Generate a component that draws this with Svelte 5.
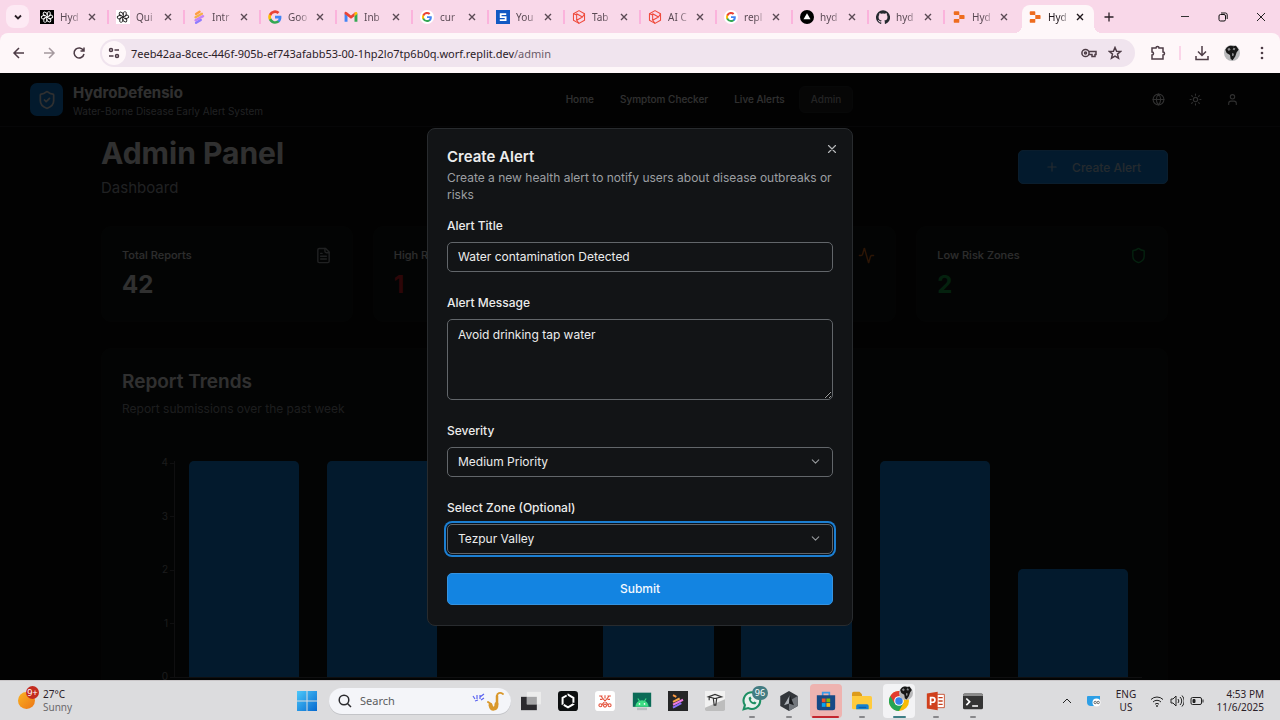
<script>
	const tabs = [
		{ icon: 'knot-dark', label: 'Hyd' },
		{ icon: 'knot', label: 'Qui' },
		{ icon: 'stripes', label: 'Intr' },
		{ icon: 'google', label: 'Goo' },
		{ icon: 'gmail', label: 'Inb' },
		{ icon: 'google-round', label: 'cur' },
		{ icon: 'letter', label: 'You' },
		{ icon: 'hex', label: 'Tab' },
		{ icon: 'hex', label: 'AI C' },
		{ icon: 'google-round', label: 'repl' },
		{ icon: 'vercel', label: 'hyd' },
		{ icon: 'github', label: 'hyd' },
		{ icon: 'replit', label: 'Hyd' },
		{ icon: 'replit', label: 'Hyd', active: true }
	];

	const links = ['Home', 'Symptom Checker', 'Live Alerts', 'Admin'];

	const stats = [
		{ label: 'Total Reports', value: 42, tone: 'plain', icon: 'file' },
		{ label: 'High Risk Zones', value: 1, tone: 'red', icon: 'alert' },
		{ label: 'Medium Risk Zones', value: 1, tone: 'orange', icon: 'activity' },
		{ label: 'Low Risk Zones', value: 2, tone: 'green', icon: 'shield' }
	];

	const max = 4;
	const ticks = [4, 3, 2, 1, 0];
	const reports = [4, 4, 0, 3, 3, 4, 2];

	const apps = [
		{ name: 'Task view', icon: 'taskview' },
		{ name: 'Hexagon', icon: 'hexagon' },
		{ name: 'Scissors', icon: 'scissors' },
		{ name: 'Android', icon: 'android' },
		{ name: 'Player', icon: 'player' },
		{ name: 'Lamp', icon: 'lamp' },
		{ name: 'WhatsApp', icon: 'whatsapp', open: true },
		{ name: 'Cursor', icon: 'cursor', open: true },
		{ name: 'Store', icon: 'store', alert: true },
		{ name: 'Explorer', icon: 'folder', open: true },
		{ name: 'Chrome', icon: 'chrome', active: true },
		{ name: 'PowerPoint', icon: 'powerpoint', open: true },
		{ name: 'Terminal', icon: 'terminal', open: true }
	];

	let title = 'Water contamination Detected';
	let message = 'Avoid drinking tap water';
	let severity = 'Medium Priority';
	let zone = 'Tezpur Valley';
</script>

{#snippet google()}
	<path fill="#4285f4" d="M23 12.3c0-.8-.1-1.600-.2-2.300H12v4.500h6.200a5.300 5.300 0 0 1-2.300 3.500v2.900h3.700c2.200-2 3.400-5 3.400-8.600z" />
	<path fill="#34a853" d="M12 23.500c3.100 0 5.700-1 7.600-2.800L15.900 18a7 7 0 0 1-10.400-3.700H1.700v3A11.500 11.500 0 0 0 12 23.500z" />
	<path fill="#fbbc05" d="M5.500 14.300a7 7 0 0 1 0-4.500v-3H1.700a11.500 11.500 0 0 0 0 10.500z" />
	<path fill="#ea4335" d="M12 5.100c1.700 0 3.200.6 4.400 1.700l3.300-3.300A11.500 11.500 0 0 0 1.700 6.800l3.800 3A6.900 6.900 0 0 1 12 5.100z" />
{/snippet}

{#snippet knot(color)}
	<g fill="none" stroke={color} stroke-width="1.600">
		{#each [0, 60, 120, 180, 240, 300] as turn}
			<path transform="rotate({turn} 12 12)" d="M12 8.500V6a3.200 3.200 0 0 1 5.500-2l-.1 5.500L12 12.500" />
		{/each}
	</g>
{/snippet}

{#snippet globe()}
	<circle cx="12" cy="12" r="12" fill="#b9b9bb" />
	<path fill="#161616" d="M2 7C5 1 10 0 14 2l4-1 4 6-3 4-2 6-4 6-3-2-1-6-5-3z" />
	<path fill="#8a8a8c" d="m5 6 3-2 2 3-3 2zm9-2 3 1-1 3-3-1zm-2 8 3 1-1 4-2-1z" />
{/snippet}

<div class="screen">
	<div class="browser">
		<div class="tabbar">
			<button class="tab-search" aria-label="Search tabs">
				<svg viewBox="0 0 12 12"><path d="m3 4.500 3 3 3-3" fill="none" stroke="#2b2027" stroke-width="1.800" /></svg>
			</button>
			{#each tabs as tab}
				<div class="tab" class:active={tab.active}>
					<svg class="favicon" viewBox="0 0 24 24">
						{#if tab.icon === 'knot-dark'}
							<rect width="24" height="24" fill="#000" />
							{@render knot('#fff')}
						{:else if tab.icon === 'knot'}
							<rect width="24" height="24" fill="#fff" />
							{@render knot('#222')}
						{:else if tab.icon === 'stripes'}
							<g fill="none" stroke-width="4" stroke-linecap="round">
								<path d="m7 7 6-4" stroke="#ff9d42" />
								<path d="m6 12.500 11-6" stroke="#f4b04a" />
								<path d="m6 17.500 13-7" stroke="#c783f5" />
								<path d="m7 22 8-5" stroke="#8f7bff" />
							</g>
						{:else if tab.icon === 'google'}
							{@render google()}
						{:else if tab.icon === 'gmail'}
							<path fill="#4285f4" d="M1 6v14h5V10z" />
							<path fill="#34a853" d="M23 6v14h-5V10z" />
							<path fill="#ea4335" d="M1 5c0-2 2-3 4-1l7 5.500L19 4l-1 6.500L12 15 1 7z" />
							<path fill="#fbbc04" d="m18 10.500 5-4C23 3 21 3 19 4l-1 1z" />
						{:else if tab.icon === 'google-round'}
							<circle cx="12" cy="12" r="12" fill="#fff" />
							<g transform="translate(3 3) scale(.75)">{@render google()}</g>
						{:else if tab.icon === 'letter'}
							<rect width="24" height="24" fill="#1259c3" />
							<path d="M17.500 7H8v5h8.500v5.500H6.500" fill="none" stroke="#fff" stroke-width="3" />
						{:else if tab.icon === 'hex'}
							<g fill="none" stroke="#ef4a3c" stroke-width="1.800" stroke-linejoin="round">
								<path d="m12 1 9.500 5.500v11L12 23l-9.500-5.500v-11z" />
								<path d="M8 6.500 18 12 8 17.500zM2.500 6.500 8 8.500M12 23l-4-5.500M21.500 6.500 18 12" />
							</g>
						{:else if tab.icon === 'vercel'}
							<circle cx="12" cy="12" r="12" fill="#000" />
							<path d="m12 5.500 6 10.500H6z" fill="#fff" />
						{:else if tab.icon === 'github'}
							<path fill="#24292f" d="M12 .5a12 12 0 0 0-3.800 23.400c.6.1.8-.3.800-.6v-2.200c-3.300.7-4-1.400-4-1.400-.6-1.400-1.400-1.800-1.400-1.800-1-.7.1-.7.1-.7 1.200.1 1.900 1.200 1.900 1.200 1 1.800 2.800 1.300 3.500 1 .1-.8.4-1.300.8-1.600-2.700-.3-5.500-1.300-5.500-6 0-1.300.5-2.300 1.200-3.200 0-.4-.5-1.600.2-3.200 0 0 1-.3 3.300 1.200a11.500 11.500 0 0 1 6 0c2.300-1.500 3.300-1.200 3.300-1.200.7 1.600.2 2.800.1 3.200.8.900 1.200 1.900 1.200 3.200 0 4.700-2.800 5.700-5.500 6 .5.4.9 1.100.9 2.200v3.300c0 .3.200.7.8.6A12 12 0 0 0 12 .5z" />
						{:else}
							<path fill="#ee6c1f" d="M4.500 2h6.500A1.500 1.500 0 0 1 12.500 3.500V8.500H4.500A1.500 1.500 0 0 1 3 7V3.500A1.500 1.500 0 0 1 4.500 2zM12.500 8.500h7.500a1.500 1.500 0 0 1 1.500 1.500v4a1.500 1.500 0 0 1-1.500 1.500h-7.500zM4.500 15.500h8v5a1.500 1.500 0 0 1-1.500 1.500H4.500A1.500 1.500 0 0 1 3 20.500V17a1.500 1.500 0 0 1 1.500-1.500z" />
						{/if}
					</svg>
					<span class="tab-label">{tab.label}</span>
					<button class="tab-close" aria-label="Close tab">
						<svg viewBox="0 0 8 8"><path d="m1 1 6 6m0-6L1 7" fill="none" stroke="currentColor" stroke-width="1.400" /></svg>
					</button>
				</div>
			{/each}
			<button class="new-tab" aria-label="New tab">
				<svg viewBox="0 0 10 10"><path d="M5 .5v9M.5 5h9" stroke="currentColor" stroke-width="1.300" /></svg>
			</button>
			<div class="window-controls">
				<button aria-label="Minimize"><svg viewBox="0 0 10 10"><path d="M1 4.500h8" stroke="#333" fill="none" /></svg></button>
				<button aria-label="Restore">
					<svg viewBox="0 0 10 10">
						<g fill="none" stroke="#111"><rect x="1" y="2.500" width="6.500" height="6.500" rx="1.500" /><path d="M3 1h4.500A1.800 1.800 0 0 1 9.200 2.800V7" /></g>
					</svg>
				</button>
				<button aria-label="Close"><svg viewBox="0 0 10 10"><path d="m1 1 8 8m0-8L1 9" stroke="#222" fill="none" /></svg></button>
			</div>
		</div>

		<div class="toolbar">
			<div class="nav-buttons">
				<button aria-label="Back"><svg viewBox="0 0 14 14"><path d="M12 7H2m5-5L2 7l5 5" /></svg></button>
				<button class="faded" aria-label="Forward"><svg viewBox="0 0 14 14"><path d="M2 7h10M7 2l5 5-5 5" /></svg></button>
				<button aria-label="Reload"><svg viewBox="0 0 14 14"><path d="M11.500 4.500A5 5 0 1 0 12 8M12 1.500V5H8.500" /></svg></button>
			</div>
			<div class="address">
				<button class="site-info" aria-label="Site information">
					<svg viewBox="0 0 14 14"><circle cx="4" cy="4" r="1.500" /><path d="M7.500 4H12M2 10h4.500" /><circle cx="10" cy="10" r="1.500" /></svg>
				</button>
				<span class="url">7eeb42aa-8cec-446f-905b-ef743afabb53-00-1hp2lo7tp6b0q.worf.replit.dev<span>/admin</span></span>
				<button aria-label="Passwords">
					<svg class="key" viewBox="0 0 16 12"><circle cx="4.500" cy="6" r="3.600" /><circle cx="4.500" cy="6" r="1" /><path d="M8 4.500h7v3h-1v2h-3v-2H8" /></svg>
				</button>
				<button aria-label="Bookmark">
					<svg viewBox="0 0 14 14"><path d="m7 1.500 1.600 3.700 4 .3-3.100 2.600 1 4L7 10l-3.500 2.100 1-4L1.400 5.500l4-.3z" /></svg>
				</button>
			</div>
			<div class="extras">
				<button aria-label="Extensions">
					<svg viewBox="0 0 16 16"><path d="M2 3h4c0-2 3-2 3 0h4v4c2 0 2 3 0 3v4H2v-4c2 0 2-3 0-3z" /></svg>
				</button>
				<span class="divider"></span>
				<button aria-label="Downloads"><svg viewBox="0 0 16 16"><path d="M8 1v9M4 6.500l4 4 4-4M2 11v3.500h12V11" /></svg></button>
				<button aria-label="Profile"><svg class="avatar" viewBox="0 0 24 24">{@render globe()}</svg></button>
				<button aria-label="Menu">
					<svg class="dots" viewBox="0 0 16 16"><circle cx="8" cy="3" r="1.300" /><circle cx="8" cy="8" r="1.300" /><circle cx="8" cy="13" r="1.300" /></svg>
				</button>
			</div>
		</div>
	</div>

	<div class="viewport">
		<header class="site-header">
			<div class="brand">
				<span class="logo">
					<svg class="icon" viewBox="0 0 24 24"><path d="M20 13c0 5-3.500 7.500-7.660 8.950a1 1 0 0 1-.67-.01C7.500 20.500 4 18 4 13V6a1 1 0 0 1 1-1c2 0 4.500-1.200 6.240-2.720a1.170 1.170 0 0 1 1.520 0C14.510 3.810 17 5 19 5a1 1 0 0 1 1 1z" /><path d="m9 12 2 2 4-4" /></svg>
				</span>
				<div class="brand-text">
					<div class="brand-name">HydroDefensio</div>
					<div class="brand-sub">Water-Borne Disease Early Alert System</div>
				</div>
			</div>
			<nav>
				{#each links as link}
					<a href="#{link}" class:current={link === 'Admin'}>{link}</a>
				{/each}
			</nav>
			<div class="header-actions">
				<button aria-label="Language"><svg class="icon" viewBox="0 0 24 24"><circle cx="12" cy="12" r="10" /><path d="M12 2a14.500 14.500 0 0 0 0 20 14.500 14.500 0 0 0 0-20M2 12h20" /></svg></button>
				<button aria-label="Theme"><svg class="icon" viewBox="0 0 24 24"><circle cx="12" cy="12" r="4" /><path d="M12 2v2m0 16v2M4.900 4.900l1.400 1.400m11.400 11.400 1.400 1.400M2 12h2m16 0h2M6.300 17.700l-1.400 1.400M19.100 4.900l-1.400 1.400" /></svg></button>
				<button aria-label="Account"><svg class="icon" viewBox="0 0 24 24"><path d="M19 21v-2a4 4 0 0 0-4-4H9a4 4 0 0 0-4 4v2" /><circle cx="12" cy="7" r="4" /></svg></button>
			</div>
		</header>

		<main>
			<div class="page-head">
				<div>
					<h1>Admin Panel</h1>
					<p>Dashboard</p>
				</div>
				<button class="primary create">
					<svg class="icon" viewBox="0 0 24 24"><path d="M5 12h14M12 5v14" /></svg>
					Create Alert
				</button>
			</div>

			<div class="stats">
				{#each stats as stat}
					<div class="card stat {stat.tone}">
						<div class="stat-head">
							<span>{stat.label}</span>
							<svg class="icon" viewBox="0 0 24 24">
								{#if stat.icon === 'file'}
									<path d="M15 2H6a2 2 0 0 0-2 2v16a2 2 0 0 0 2 2h12a2 2 0 0 0 2-2V7z" />
									<path d="M14 2v4a2 2 0 0 0 2 2h4M10 9H8m8 4H8m8 4H8" />
								{:else if stat.icon === 'alert'}
									<path d="m12 3 10 18H2zM12 9v5m0 3v1" />
								{:else if stat.icon === 'activity'}
									<path d="M22 12h-2.500a2 2 0 0 0-1.900 1.500l-2.400 8.300a.2.200 0 0 1-.4 0L9.200 2.200a.2.200 0 0 0-.4 0l-2.400 8.300A2 2 0 0 1 4.500 12H2" />
								{:else}
									<path d="M20 13c0 5-3.500 7.500-7.660 8.950a1 1 0 0 1-.67-.01C7.500 20.500 4 18 4 13V6a1 1 0 0 1 1-1c2 0 4.500-1.200 6.240-2.720a1.170 1.170 0 0 1 1.520 0C14.510 3.810 17 5 19 5a1 1 0 0 1 1 1z" />
								{/if}
							</svg>
						</div>
						<div class="stat-value">{stat.value}</div>
					</div>
				{/each}
			</div>

			<section class="card trends">
				<h2>Report Trends</h2>
				<p>Report submissions over the past week</p>
				<div class="chart">
					<div class="y-axis">
						{#each ticks as tick}
							<span>{tick}</span>
						{/each}
					</div>
					<div class="plot">
						{#each reports as count}
							<div class="band"><div class="bar" style="height: {(count / max) * 100}%"></div></div>
						{/each}
					</div>
				</div>
			</section>
		</main>

		<div class="overlay">
			<div class="dialog" role="dialog" aria-labelledby="dialog-title">
				<button class="close" aria-label="Close">
					<svg class="icon" viewBox="0 0 24 24"><path d="M18 6 6 18M6 6l12 12" /></svg>
				</button>
				<h2 id="dialog-title">Create Alert</h2>
				<p>Create a new health alert to notify users about disease outbreaks or risks</p>
				<form>
					<div class="fields">
						<div class="field">
							<label for="title">Alert Title</label>
							<input id="title" type="text" bind:value={title} />
						</div>
						<div class="field">
							<label for="message">Alert Message</label>
							<textarea id="message" bind:value={message}></textarea>
						</div>
						<div class="field">
							<label for="severity">Severity</label>
							<div class="select">
								<select id="severity" bind:value={severity}>
									<option>Low Priority</option>
									<option>Medium Priority</option>
									<option>High Priority</option>
								</select>
								<svg class="icon" viewBox="0 0 24 24"><path d="m6 9 6 6 6-6" /></svg>
							</div>
						</div>
						<div class="field">
							<label for="zone">Select Zone (Optional)</label>
							<div class="select focused">
								<select id="zone" bind:value={zone}>
									<option>Tezpur Valley</option>
								</select>
								<svg class="icon" viewBox="0 0 24 24"><path d="m6 9 6 6 6-6" /></svg>
							</div>
						</div>
					</div>
					<button type="button" class="primary">Submit</button>
				</form>
			</div>
		</div>
	</div>

	<footer class="taskbar">
		<div class="weather">
			<div class="sun"><span class="count">9+</span></div>
			<div>
				<div>27°C</div>
				<div class="soft">Sunny</div>
			</div>
		</div>

		<div class="dock">
			<button class="start" aria-label="Start">
				<svg viewBox="0 0 20 20">
					<defs>
						<linearGradient id="win" x1="0" y1="0" x2="1" y2="1"><stop offset="0" stop-color="#4cc8fa" /><stop offset="1" stop-color="#0568cf" /></linearGradient>
					</defs>
					<path fill="url(#win)" d="M0 0h9.500v9.500H0zM10.500 0H20v9.500h-9.500zM0 10.500h9.500V20H0zM10.500 10.500H20V20h-9.500z" />
				</svg>
			</button>
			<label class="search">
				<svg viewBox="0 0 14 14"><circle cx="6" cy="6" r="4.800" /><path d="m9.500 9.500 3.500 3.500" /></svg>
				<input type="text" placeholder="Search" aria-label="Search" />
				<svg class="sax" viewBox="0 0 34 22">
					<g fill="none" stroke="#5b63f0" stroke-width="1.200"><path d="m2 6 2 3m2-4v4m3-2 4-3M4 11l3-1m3 0 3-2M9 5v4" /></g>
					<g fill="none" stroke="#d9982b" stroke-linecap="round"><path stroke-width="1.800" d="M32 4c-3-2-6-1-6 2" /><path stroke-width="2.500" d="M26 6v8" /><path stroke-width="4" d="M25.500 14c0 6-5 6-6 1" /><path stroke-width="2" d="m17 12 3 2" /></g>
				</svg>
			</label>
			<div class="apps">
				{#each apps as app}
					<button class="app" class:open={app.open} class:active={app.active} class:alert={app.alert} aria-label={app.name}>
						<svg viewBox="0 0 24 24">
							{#if app.icon === 'taskview'}
								<path fill="#2b2a2e" d="M0 7h19v16H0z" />
								<path fill="#ececec" d="M7 1h17v15H7z" /><path fill="#a5a5a7" d="M7 7h12v9H7z" />
							{:else if app.icon === 'hexagon'}
								<rect width="24" height="24" rx="4" fill="#0d0f10" />
								<path d="m12 4.500 6.500 3.700v7.600L12 19.500l-6.500-3.700V8.200z" fill="none" stroke="#fff" stroke-width="2.400" stroke-dasharray="13.500 1.400" />
							{:else if app.icon === 'scissors'}
								<rect width="24" height="24" rx="4" fill="#fff" />
								<g fill="none" stroke="#e4513b" stroke-width="1.300"><path d="m7 6 9 11M17 6 8 17M5 6h4m6 0h4M9 10H6m9 0h3M12 5v4" /><circle cx="6.500" cy="17" r="1.800" /><circle cx="12" cy="17.500" r="1.800" /><circle cx="17.500" cy="17" r="1.800" /></g>
							{:else if app.icon === 'android'}
								<rect x="1" y="2" width="22" height="17" fill="#0b6b57" />
								<path fill="#3ddc84" d="M4 19a8 8 0 0 1 16 0z" /><path d="m7 9 2 3m8-3-2 3" stroke="#3ddc84" stroke-width="1.400" />
								<circle cx="9" cy="15.500" r="1" fill="#fff" /><circle cx="15" cy="15.500" r="1" fill="#fff" />
								<path fill="#b9bec0" d="M6 20h12v3H6z" />
							{:else if app.icon === 'player'}
								<rect width="24" height="24" fill="#252627" />
								<g stroke-width="2.400"><path d="m6 5 4 2" stroke="#ff9b42" /><path d="m6 13 8-4" stroke="#f5a54b" /><path d="m6 16.500 12-6" stroke="#ed7be0" /><path d="m6 20 10-5.500" stroke="#8d72ff" /></g>
							{:else if app.icon === 'lamp'}
								<rect width="24" height="24" rx="2" fill="#bdbdbd" /><path fill="#f1f1f1" d="M0 0h24v10L0 20z" />
								<g fill="none" stroke="#333" stroke-width="1.400"><path d="M4 7l8-3 8 3-8 2zM10 9l1 8h2l1-8M5 8v3" /></g>
							{:else if app.icon === 'whatsapp'}
								<path d="M2 22 3.500 17A10 10 0 1 1 7.500 20.500z" fill="#e8f1ed" stroke="#1d8f63" stroke-width="2.500" />
								<path d="M8 8c0 5 4 8 8 8l1.500-2-2.500-1.500-1.500 1c-1.500-.5-2.500-1.500-3-3l1-1.500L10 6.500z" fill="#1d8f63" />
							{:else if app.icon === 'cursor'}
								<path fill="#33363b" d="m12 0 10.500 6v12L12 24 1.500 18V6z" /><path fill="#73777d" d="m12 12 10.500-6v12L12 24z" />
								<path fill="#aeb2b8" d="M13 5 6 17l6-2z" /><path fill="#191b1f" d="m13 5 5 12-6-2z" />
							{:else if app.icon === 'store'}
								<path d="M8 6V2h8v4" fill="none" stroke="#3b9bea" stroke-width="2" /><path fill="#174a86" d="M1 5h22v15a3 3 0 0 1-3 3H4a3 3 0 0 1-3-3z" />
								<path fill="#f35325" d="M7 9h4.500v4.500H7z" /><path fill="#81bc06" d="M12.500 9H17v4.500h-4.500z" /><path fill="#05a6f0" d="M7 14.500h4.500V19H7z" /><path fill="#ffba08" d="M12.500 14.500H17V19h-4.500z" />
							{:else if app.icon === 'folder'}
								<path fill="#dd9b1b" d="M0 3a2 2 0 0 1 2-2h7l3 3v4H0z" /><path fill="#ffcb3d" d="M0 6h22a2 2 0 0 1 2 2v12a2 2 0 0 1-2 2H2a2 2 0 0 1-2-2z" /><path fill="#1681d0" d="M5 22v-4a2 2 0 0 1 2-2h11a2 2 0 0 1 2 2v4z" /><path fill="#0f5fa4" d="M8 19h9v1.500H8z" />
							{:else if app.icon === 'chrome'}
								<circle cx="12" cy="12" r="12" fill="#f9bb05" /><path fill="#23a455" d="M1.600 6A12 12 0 0 0 12 24l5.200-9L12 12z" />
								<path fill="#e33b2e" d="M1.600 6 6.800 15 12 12V6h10.400A12 12 0 0 0 1.600 6z" /><circle cx="12" cy="12" r="5.800" fill="#fff" /><circle cx="12" cy="12" r="4.500" fill="#357fe8" />
							{:else if app.icon === 'powerpoint'}
								<path fill="#fff" stroke="#c43e1c" d="M12 4h10v16H12z" /><path d="M15 8h5m-5 4h5m-5 4h5" stroke="#c43e1c" stroke-width="1.600" />
								<path fill="#d0401d" d="m1 3 13-2v22L1 21z" /><path d="M5.500 17V8h2.500a2.500 2.500 0 0 1 0 5.500H6" fill="none" stroke="#fff" stroke-width="2" />
							{:else}
								<rect y="3" width="24" height="19" rx="2" fill="#343434" /><path fill="#8b8b8b" d="M0 5a2 2 0 0 1 2-2h20a2 2 0 0 1 2 2v1H0z" />
								<path d="m4 9 4 4-4 4m7 1h7" fill="none" stroke="#fff" stroke-width="2" />
							{/if}
						</svg>
						{#if app.icon === 'whatsapp'}
							<span class="badge">96</span>
						{:else if app.icon === 'chrome'}
							<svg class="badge-globe" viewBox="0 0 24 24">{@render globe()}</svg>
						{/if}
					</button>
				{/each}
			</div>
		</div>

		<div class="tray">
			<svg viewBox="0 0 14 14"><path d="m3 9 4-4 4 4" /></svg>
			<svg class="meet" viewBox="0 0 16 14">
				<path fill="#2d9fe6" stroke="none" d="M1 3a1 1 0 0 1 1-1h12v8l-5 2H5a4 4 0 0 1-4-4z" /><circle cx="10.500" cy="8.500" r="4" fill="#fff" stroke="none" />
				<circle cx="9.200" cy="8.500" r="1.200" stroke="#666" /><circle cx="12.200" cy="8.500" r="1.200" stroke="#666" />
			</svg>
			<div class="lang"><div>ENG</div><div>US</div></div>
			<div class="status">
				<svg viewBox="0 0 14 14"><path d="M1 5.500a8.500 8.500 0 0 1 12 0M3 8a5.500 5.500 0 0 1 8 0M5 10.200a3 3 0 0 1 4 0" /><circle cx="7" cy="12" r=".6" /></svg>
				<svg viewBox="0 0 14 14"><path d="M1 5h2l3-3v10L3 9H1zM8 5a3 3 0 0 1 0 4m2-6a5.500 5.500 0 0 1 0 8m2-9.500a8 8 0 0 1 0 11" /></svg>
				<svg viewBox="0 0 14 14"><rect x="1" y="3.500" width="10.500" height="7" rx="1.500" /><path d="M13 5.500v3" /><path fill="#222" d="M3 5.500h2v3H3z" /></svg>
			</div>
			<div class="clock"><div>4:53 PM</div><div>11/6/2025</div></div>
		</div>
	</footer>
</div>

<style>
	:global(body) {
		background: #020202;
	}

	.screen {
		display: flex;
		flex-direction: column;
		height: 100vh;
		overflow: hidden;
		font-family: 'Noto Sans', 'Open Sans', sans-serif;
		font-size: 12px;
		color: #2b2027;
	}

	.screen * {
		box-sizing: border-box;
	}

	button {
		display: flex;
		align-items: center;
		justify-content: center;
		padding: 0;
		border: none;
		background: none;
		color: inherit;
		font: inherit;
		flex-shrink: 0;
	}

	svg {
		display: block;
		flex-shrink: 0;
	}

	h1,
	h2,
	p {
		margin: 0;
	}

	/* browser chrome */
	.browser {
		flex-shrink: 0;
		background: #f9d8e9;
	}

	.tabbar {
		display: flex;
		align-items: center;
		height: 33px;
		padding-left: 6px;
	}

	.tab-search {
		width: 23px;
		height: 23px;
		margin-right: 5px;
		border-radius: 8px;
		background: #fdeaf4;
	}

	.tab-search svg {
		width: 12px;
		height: 12px;
	}

	.tab {
		display: flex;
		align-items: center;
		position: relative;
		flex: 0 1 76px;
		min-width: 0;
		height: 28px;
		padding: 0 14px 0 6px;
		color: #5a4a54;
	}

	.tab::after {
		content: '';
		position: absolute;
		right: 1px;
		width: 2px;
		height: 14px;
		background: #fbb3dc;
	}

	.tab.active {
		align-self: flex-end;
		flex-basis: 72px;
		padding-right: 10px;
		padding-bottom: 5px;
		border-radius: 8px 8px 0 0;
		background: #fef7f9;
		color: #1f171c;
	}

	.tab.active::after,
	.tab.active::before {
		content: '';
		position: absolute;
		bottom: 0;
		right: -8px;
		width: 8px;
		height: 8px;
		background: radial-gradient(circle at 100% 0, transparent 8px, #fef7f9 8px);
	}

	.tab.active::before {
		right: auto;
		left: -8px;
		background: radial-gradient(circle at 0 0, transparent 8px, #fef7f9 8px);
	}

	.tab:has(+ .active)::after {
		display: none;
	}

	.favicon {
		width: 14px;
		height: 14px;
	}

	.tab-label {
		flex: 1;
		min-width: 0;
		margin: 0 6px;
		white-space: nowrap;
		font-size: 10px;
		mask-image: linear-gradient(90deg, #000 50%, transparent);
	}

	.tab-close svg {
		width: 8px;
		height: 8px;
	}

	.new-tab {
		width: 26px;
		height: 26px;
		margin-left: 2px;
	}

	.new-tab svg,
	.window-controls svg {
		width: 10px;
		height: 10px;
	}

	.window-controls {
		display: flex;
		margin-left: auto;
	}

	.window-controls button {
		width: 38px;
		height: 32px;
	}

	.toolbar {
		display: flex;
		align-items: center;
		height: 40px;
		border-radius: 8px 8px 0 0;
		background: #fef7f9;
	}

	.toolbar svg {
		width: 14px;
		height: 14px;
		fill: none;
		stroke: #4d3c46;
		stroke-width: 1.5;
	}

	.nav-buttons {
		display: flex;
		padding: 0 6px 0 4px;
	}

	.nav-buttons button {
		width: 30px;
		height: 30px;
	}

	.faded {
		opacity: 0.5;
	}

	.address {
		display: flex;
		align-items: center;
		flex: 1;
		min-width: 0;
		height: 28px;
		padding: 0 7px 0 2px;
		border-radius: 14px;
		background: #f0e4ee;
	}

	.address button {
		width: 26px;
		height: 24px;
	}

	.address .site-info {
		width: 24px;
		border-radius: 12px;
		background: #fef7f9;
	}

	.address .key {
		width: 16px;
		height: 12px;
	}

	.url {
		flex: 1;
		min-width: 0;
		padding-left: 5px;
		white-space: nowrap;
		font-size: 11px;
	}

	.url span {
		color: #6a5a68;
	}

	.extras {
		display: flex;
		align-items: center;
		padding: 0 3px 0 8px;
	}

	.extras button {
		width: 30px;
		height: 30px;
	}

	.divider {
		width: 2px;
		height: 14px;
		margin: 0 6px;
		background: #fbd5e9;
	}

	.toolbar .extras svg {
		width: 16px;
		height: 16px;
	}

	.toolbar .avatar {
		stroke: none;
	}

	.toolbar .dots {
		fill: #4d3c46;
		stroke: none;
	}

	/* web page */
	.viewport {
		position: relative;
		flex: 1;
		min-height: 0;
		overflow: hidden;
		background: #0a0a0b;
		color: #f0f0f0;
		font-family: Inter, sans-serif;
	}

	.icon {
		fill: none;
		stroke: currentColor;
		stroke-width: 2;
		stroke-linecap: round;
		stroke-linejoin: round;
	}

	.site-header {
		display: flex;
		align-items: center;
		justify-content: space-between;
		height: 54px;
		padding: 0 32px 0 30px;
		border-bottom: 1px solid #202124;
	}

	.brand {
		display: flex;
		align-items: center;
		gap: 10px;
	}

	.logo {
		display: grid;
		place-items: center;
		width: 33px;
		height: 33px;
		border-radius: 7px;
		background: #1384e1;
	}

	.logo .icon {
		width: 20px;
		height: 20px;
	}

	.brand-text {
		padding-top: 2px;
	}

	.brand-name {
		font-size: 15px;
		line-height: 20px;
		font-weight: 700;
	}

	.brand-sub {
		font-size: 10px;
		line-height: 16px;
		color: #a0a4a8;
	}

	nav {
		display: flex;
		gap: 2px;
	}

	nav a {
		padding: 0 11px;
		border: 1px solid transparent;
		border-radius: 6px;
		line-height: 25px;
		font-size: 10px;
		font-weight: 500;
		color: inherit;
		text-decoration: none;
	}

	nav .current {
		border-color: #26282a;
		background: #1e1f21;
		color: #b0b0b2;
	}

	.header-actions {
		display: flex;
		justify-content: flex-end;
		gap: 7px;
	}

	.header-actions button {
		width: 30px;
		height: 30px;
	}

	.header-actions .icon {
		width: 13px;
		height: 13px;
	}

	main {
		width: calc(100% - 213px);
		margin-left: 101px;
		padding-top: 7px;
	}

	.page-head {
		display: flex;
		align-items: center;
		justify-content: space-between;
		margin-bottom: 26px;
	}

	h1 {
		font-size: 30px;
		line-height: 38px;
		font-weight: 700;
	}

	.page-head p {
		margin-top: 4px;
		font-size: 15px;
		line-height: 24px;
		color: #a0a4a8;
	}

	.primary {
		height: 32px;
		border: 1px solid #3593e0;
		border-radius: 5px;
		background: #1384e1;
		color: #f4f9ff;
		font-size: 12px;
		font-weight: 500;
	}

	.create {
		height: 34px;
		gap: 13px;
		padding: 0 26px;
		color: #b4cfe6;
	}

	.create .icon {
		width: 14px;
		height: 14px;
	}

	.card {
		border: 1px solid #151817;
		border-radius: 10px;
		background: #111514;
	}

	.stats {
		display: grid;
		grid-template-columns: repeat(4, 1fr);
		gap: 20px;
		margin-bottom: 26px;
	}

	.stat {
		padding: 20px 20px 21px;
	}

	.stat-head {
		display: flex;
		align-items: center;
		justify-content: space-between;
		height: 16px;
		color: #e0e0e0;
		font-size: 11px;
		font-weight: 500;
	}

	.stat-head .icon {
		width: 17px;
		height: 17px;
		color: #a0a4a8;
	}

	.stat-value {
		margin-top: 7px;
		font-size: 24px;
		line-height: 30px;
		font-weight: 700;
	}

	.red .stat-value,
	.red .icon {
		color: #e01e28;
	}

	.orange .stat-value,
	.orange .icon {
		color: #d9681a;
	}

	.green .stat-value,
	.green .icon {
		color: #16a349;
	}

	.trends {
		padding: 19px 20px 60px;
	}

	.trends h2 {
		font-size: 19px;
		line-height: 28px;
		font-weight: 600;
	}

	.trends p {
		margin-top: 4px;
		font-size: 12px;
		line-height: 18px;
		color: #8c9094;
	}

	.chart {
		display: flex;
		margin-top: 43px;
		padding-right: 5px;
	}

	.y-axis {
		display: flex;
		flex-direction: column;
		justify-content: space-between;
		width: 52px;
		height: 217px;
		color: #85898c;
		font-size: 10px;
		line-height: 2px;
		text-align: right;
	}

	.y-axis span::after {
		content: '';
		display: inline-block;
		width: 4px;
		height: 1px;
		margin-left: 2px;
		vertical-align: middle;
		background: #4a4d4f;
	}

	.plot {
		display: grid;
		grid-template-columns: repeat(7, 1fr);
		flex: 1;
		height: 217px;
		border: solid #4a4d4f;
		border-width: 0 0 1px 1px;
	}

	.band {
		display: flex;
		align-items: flex-end;
		padding: 0 10%;
	}

	.bar {
		flex: 1;
		border-radius: 5px 5px 0 0;
		background: #1384e1;
	}

	.overlay {
		position: absolute;
		inset: 0;
		display: grid;
		place-items: center;
		background: rgba(0, 0, 0, 0.8);
	}

	.dialog {
		position: relative;
		width: 426px;
		max-width: 100%;
		padding: 20px 19px 20px;
		border: 1px solid #282b2e;
		border-radius: 8px;
		background: #121416;
		color: #ececec;
	}

	.dialog h2 {
		font-size: 15px;
		line-height: 16px;
		font-weight: 600;
	}

	.dialog p {
		margin: 4px 0 15px;
		font-size: 12px;
		line-height: 17px;
		color: #9c9fa2;
	}

	.close {
		position: absolute;
		top: 13px;
		right: 13px;
		width: 14px;
		height: 14px;
		color: #b5b7b9;
	}

	.close .icon {
		width: 14px;
		height: 14px;
	}

	form {
		display: grid;
		gap: 19px;
	}

	.fields {
		display: grid;
		gap: 23px;
	}

	.field {
		display: grid;
		gap: 8px;
	}

	label {
		font-size: 12px;
		line-height: 16px;
		font-weight: 500;
	}

	.field input,
	textarea,
	select {
		display: block;
		width: 100%;
		height: 30px;
		margin: 0;
		padding: 0 10px;
		border: 1px solid #62666a;
		border-radius: 5px;
		outline: none;
		background: #121416;
		color: #ececec;
		font-family: inherit;
		font-size: 12px;
		line-height: 17px;
	}

	textarea {
		height: 81px;
		padding-top: 6px;
		resize: vertical;
		color-scheme: dark;
	}

	select {
		appearance: none;
	}

	.select {
		display: grid;
		align-items: center;
	}

	.select > * {
		grid-area: 1 / 1;
	}

	.select .icon {
		justify-self: end;
		width: 13px;
		height: 13px;
		margin-right: 11px;
		color: #96999c;
		pointer-events: none;
	}

	.focused select {
		box-shadow:
			0 0 0 1px #07131f,
			0 0 0 3px #1c7fd2;
	}

	/* taskbar */
	.taskbar {
		display: grid;
		grid-template-columns: 1fr auto 1fr;
		align-items: center;
		height: 40px;
		flex-shrink: 0;
		border-top: 1px solid #c9c6c8;
		background: #dcdcde;
		font-size: 10px;
		line-height: 13px;
	}

	.weather {
		display: flex;
		align-items: center;
		gap: 8px;
		padding-left: 18px;
	}

	.sun {
		position: relative;
		width: 17px;
		height: 17px;
		border-radius: 50%;
		background: linear-gradient(135deg, #fbb321, #ec7516);
	}

	.count {
		position: absolute;
		top: -6px;
		left: 8px;
		width: 13px;
		border-radius: 7px;
		background: #c42b1f;
		color: #fff;
		font-size: 9px;
		line-height: 13px;
		text-align: center;
	}

	.soft {
		color: #6a696c;
	}

	.dock {
		display: flex;
		align-items: center;
	}

	.start {
		width: 36px;
		height: 36px;
		margin-right: 4px;
	}

	.start svg {
		width: 20px;
		height: 20px;
	}

	.search {
		display: flex;
		align-items: center;
		gap: 8px;
		width: 182px;
		height: 26px;
		margin-right: 2px;
		padding: 0 6px 0 9px;
		border-radius: 13px;
		background: #f4f5f9;
		box-shadow: 0 1px 0 #c3c4c8;
	}

	.search svg {
		width: 14px;
		height: 14px;
		fill: none;
		stroke: #2b2b2e;
		stroke-width: 1.5;
	}

	.search .sax {
		width: 34px;
		height: 22px;
	}

	.search input {
		flex: 1;
		min-width: 0;
		padding: 0;
		border: none;
		outline: none;
		background: none;
		font-family: inherit;
		font-size: 11px;
	}

	.search input::placeholder {
		color: #5b5c60;
	}

	.apps {
		display: grid;
		grid-template-columns: repeat(13, 1fr);
		width: 478px;
	}

	.app {
		position: relative;
		justify-self: center;
		width: 32px;
		height: 34px;
		border-radius: 4px;
	}

	.app > svg {
		width: 20px;
		height: 20px;
	}

	.app.active {
		background: #f3f3f5;
	}

	.app.alert {
		background: #eeb3b0;
	}

	.app.open::after,
	.app.active::after,
	.app.alert::after {
		content: '';
		position: absolute;
		bottom: 0;
		width: 6px;
		height: 2px;
		border-radius: 2px;
		background: #88888b;
	}

	.app.active::after {
		width: 13px;
		background: #3f7f86;
	}

	.app.alert::after {
		width: 27px;
		background: #c4262e;
	}

	.badge {
		position: absolute;
		top: 2px;
		right: 0;
		width: 16px;
		border-radius: 7px;
		background: #437c82;
		color: #fff;
		font-size: 9px;
		line-height: 14px;
	}

	.app .badge-globe {
		position: absolute;
		top: 2px;
		right: 2px;
		width: 14px;
		height: 14px;
	}

	.tray {
		display: flex;
		align-items: center;
		justify-content: flex-end;
		padding-right: 16px;
	}

	.tray svg {
		width: 14px;
		height: 14px;
		fill: none;
		stroke: #222;
	}

	.tray .meet {
		width: 16px;
		margin-left: 12px;
	}

	.lang {
		width: 48px;
		text-align: center;
	}

	.status {
		display: flex;
		gap: 6px;
	}

	.clock {
		width: 60px;
		text-align: right;
	}
</style>
